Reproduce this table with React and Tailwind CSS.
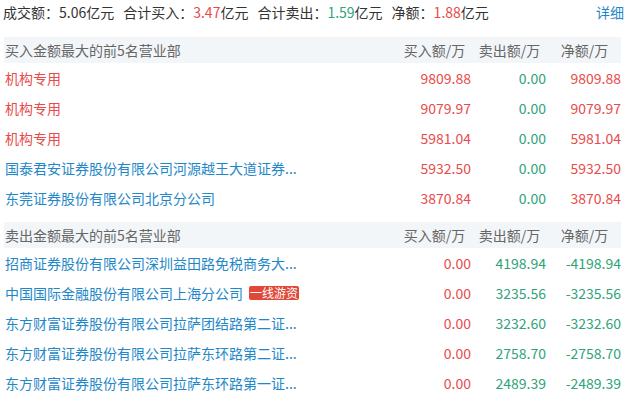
const RED = "text-[#e94b4b]";
const GREEN = "text-[#2fa37a]";

const buyRows = [
  { name: "机构专用", inst: true, buy: "9809.88", sell: "0.00", net: "9809.88" },
  { name: "机构专用", inst: true, buy: "9079.97", sell: "0.00", net: "9079.97" },
  { name: "机构专用", inst: true, buy: "5981.04", sell: "0.00", net: "5981.04" },
  { name: "国泰君安证券股份有限公司河源越王大道证券...", buy: "5932.50", sell: "0.00", net: "5932.50" },
  { name: "东莞证券股份有限公司北京分公司", buy: "3870.84", sell: "0.00", net: "3870.84" },
];

const sellRows = [
  { name: "招商证券股份有限公司深圳益田路免税商务大...", buy: "0.00", sell: "4198.94", net: "-4198.94" },
  { name: "中国国际金融股份有限公司上海分公司", badge: "一线游资", buy: "0.00", sell: "3235.56", net: "-3235.56" },
  { name: "东方财富证券股份有限公司拉萨团结路第二证...", buy: "0.00", sell: "3232.60", net: "-3232.60" },
  { name: "东方财富证券股份有限公司拉萨东环路第二证...", buy: "0.00", sell: "2758.70", net: "-2758.70" },
  { name: "东方财富证券股份有限公司拉萨东环路第一证...", buy: "0.00", sell: "2489.39", net: "-2489.39" },
];

function Header({ title }) {
  return (
    <div className="flex h-[26px] items-center bg-[#f3f6f9] text-[#666666] leading-none">
      <div className="flex-1 pl-[1px]">{title}</div>
      <div className="w-[75px] pl-[2px] text-center">买入额/万</div>
      <div className="w-[75px] pl-[2px] text-center">卖出额/万</div>
      <div className="w-[75px] pl-[2px] text-center">净额/万</div>
    </div>
  );
}

function Row({ r, section }) {
  const nameColor = r.inst ? "text-[#e94b4b]" : "text-[#1f88c9]";
  return (
    <div className="flex h-[30px] items-center leading-none">
      <div className={`flex flex-1 items-center pl-[1px] ${nameColor}`}>
        <span>{r.name}</span>
        {r.badge && (
          <span className="ml-[6px] rounded-[2px] bg-[#e0483a] px-[1px] py-[1px] text-[12px] leading-[12px] text-white">
            {r.badge}
          </span>
        )}
      </div>
      <div className={`w-[75px] text-right ${RED}`}>{r.buy}</div>
      <div className={`w-[75px] text-right ${GREEN}`}>{r.sell}</div>
      <div className={`w-[75px] text-right ${section === "buy" ? RED : GREEN}`}>{r.net}</div>
    </div>
  );
}

export default function App() {
  return (
    <div
      className="h-[395px] w-[632px] overflow-hidden bg-white pl-[4px] pr-[8px] text-[14px] text-[#333333]"
      style={{ fontFamily: '"Noto Sans CJK SC", "Noto Sans", sans-serif' }}
    >
      <div className="mb-[13px] flex h-[24px] items-center leading-none">
        <div className="flex flex-1 items-center gap-[9px] -ml-[1px]">
          <span>
            成交额：5.06亿元
          </span>
          <span>
            合计买入：<span className={RED}>3.47</span>亿元
          </span>
          <span>
            合计卖出：<span className={GREEN}>1.59</span>亿元
          </span>
          <span>
            净额：<span className={RED}>1.88</span>亿元
          </span>
        </div>
        <span className="text-[#1f88c9]">详细</span>
      </div>
      <div className="pr-[3px]">
        <Header title="买入金额最大的前5名营业部" />
      </div>
      <div className="pr-[3px]">
        {buyRows.map((r, i) => (
          <Row key={i} r={r} section="buy" />
        ))}
      </div>
      <div className="mt-[9px] pr-[3px]">
        <Header title="卖出金额最大的前5名营业部" />
      </div>
      <div className="pr-[3px]">
        {sellRows.map((r, i) => (
          <Row key={i} r={r} section="sell" />
        ))}
      </div>
    </div>
  );
}
